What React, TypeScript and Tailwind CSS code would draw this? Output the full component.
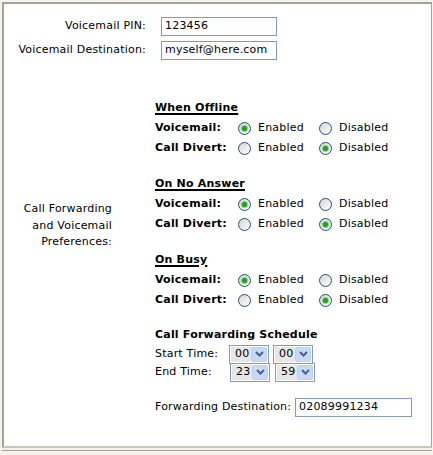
import React from "react";

const font = { fontFamily: '"DejaVu Sans", Verdana, sans-serif' };

function Radio({ checked }: { checked?: boolean }) {
  return (
    <span className="relative inline-flex h-[13px] w-[13px] shrink-0 items-center justify-center rounded-full border border-[#1c5180] bg-gradient-to-br from-[#d6d6ce] to-white">
      {checked && (
        <span className="h-[5px] w-[5px] rounded-full bg-[#21a121] shadow-[0_0_1px_1px_#7fd17f]" />
      )}
    </span>
  );
}

function RadioRow({ label, first }: { label: string; first: "on" | "off" }) {
  return (
    <div className="flex h-[20px] items-center">
      <span className="w-[83px] font-bold">{label}</span>
      <Radio checked={first === "on"} />
      <span className="ml-[7px] w-[61px]">Enabled</span>
      <Radio checked={first === "off"} />
      <span className="ml-[7px]">Disabled</span>
    </div>
  );
}

function Section({ title, vm, cd }: { title: string; vm: "on" | "off"; cd: "on" | "off" }) {
  return (
    <div className="flex flex-col">
      <div className="flex h-[20px] items-center font-bold underline decoration-[1.5px] underline-offset-2">{title}</div>
      <RadioRow label="Voicemail:" first={vm} />
      <RadioRow label="Call Divert:" first={cd} />
    </div>
  );
}

function Select({ value }: { value: string }) {
  return (
    <div className="flex h-[19px] w-[40px] border border-[#7f9db9] bg-white p-[1px]">
      <div className="flex flex-1 items-center bg-[#e6e6e6] pl-[4px] text-[11px]">{value}</div>
      <div className="flex w-[16px] items-center justify-center rounded-[2px] border border-[#bcd0f4] bg-[#c8d8fb]">
        <svg width="9" height="6" viewBox="0 0 9 6">
          <path d="M1 1 L4.5 4.5 L8 1" stroke="#4d6185" strokeWidth="2" fill="none" />
        </svg>
      </div>
    </div>
  );
}

function TextBox({ value, w }: { value: string; w: string }) {
  return (
    <div className={`flex h-[19px] items-center border border-[#7f9db9] bg-white pl-[3px] ${w}`}>
      {value}
    </div>
  );
}

export default function App() {
  return (
    <div className="h-[455px] w-[433px] overflow-hidden bg-[#f4f4ec] text-[11px] tracking-[0.2px] text-black" style={font}>
      <div className="ml-[2px] mt-[2px] h-[446px] w-[430px] border-2 border-r border-[#a3a392] border-b-[#c8c8b8] bg-white">
        <div className="flex flex-col pt-[10px]">
          <div className="flex h-[24px] items-center pt-[1px]">
            <span className="w-[142px] text-right">Voicemail PIN:</span>
            <span className="ml-[15px]">
              <TextBox value="123456" w="w-[116px]" />
            </span>
          </div>
          <div className="flex h-[24px] items-center pt-[1px]">
            <span className="w-[142px] text-right">Voicemail Destination:</span>
            <span className="ml-[15px]">
              <TextBox value="myself@here.com" w="w-[116px]" />
            </span>
          </div>
        </div>

        <div className="mt-[36px] flex">
          <div className="w-[108px] pt-[103px] text-right leading-[16.5px]">
            Call Forwarding
            <br />
            and Voicemail
            <br />
            Preferences:
          </div>
          <div className="ml-[43px] flex flex-col">
            <Section title="When Offline" vm="on" cd="off" />
            <div className="h-[16px]" />
            <Section title="On No Answer" vm="on" cd="off" />
            <div className="h-[16px]" />
            <Section title="On Busy" vm="on" cd="off" />
            <div className="h-[16px]" />
            <div className="flex h-[19px] items-center font-bold">Call Forwarding Schedule</div>
            <div className="flex h-[18px] items-center">
              <span className="w-[74px]">Start Time:</span>
              <Select value="00" />
              <span className="ml-[4px]">
                <Select value="00" />
              </span>
            </div>
            <div className="flex h-[18px] items-center">
              <span className="w-[75px]">End Time:</span>
              <Select value="23" />
              <span className="ml-[5px]">
                <Select value="59" />
              </span>
            </div>
            <div className="h-[17px]" />
            <div className="flex h-[19px] items-center">
              <span className="w-[140px]">Forwarding Destination:</span>
              <TextBox value="02089991234" w="w-[117px]" />
            </div>
          </div>
        </div>
      </div>
      <div className="mt-[2px] ml-[2px] h-[2px] w-[430px] border-t border-[#a3a392]" />
    </div>
  );
}
